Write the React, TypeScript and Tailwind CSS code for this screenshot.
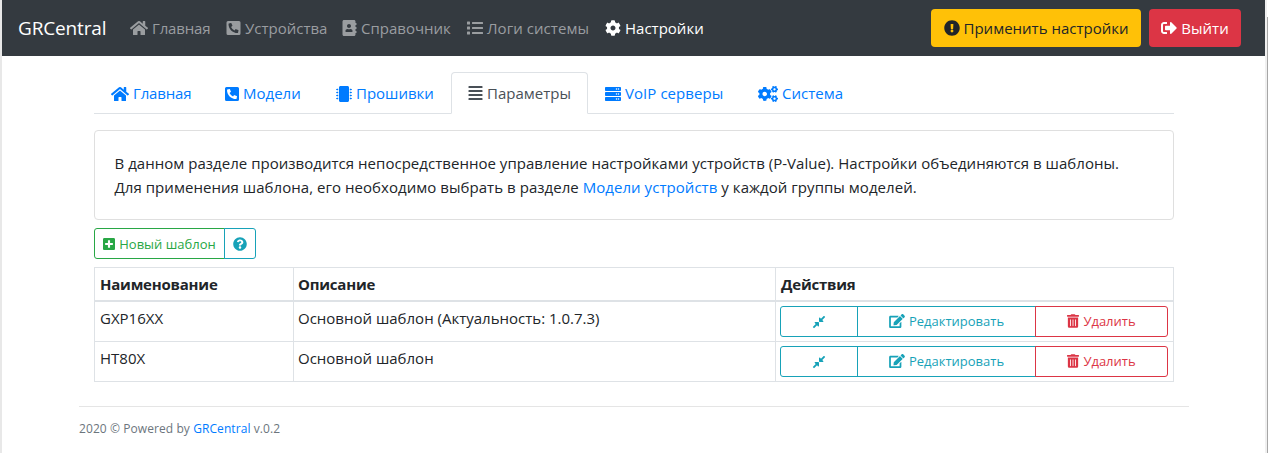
import type { ReactNode } from 'react';
import {
  FaHome, FaPhoneSquareAlt, FaAddressBook, FaList, FaCog, FaExclamationCircle, FaSignOutAlt,
  FaMicrochip, FaAlignJustify, FaServer, FaCogs, FaPlusSquare, FaQuestionCircle, FaCompressAlt,
  FaEdit, FaTrashAlt,
} from 'react-icons/fa';

function Item({ icon, label, className }: { icon: ReactNode; label: string; className: string }) {
  return (
    <a className={`flex shrink-0 items-center gap-1 whitespace-nowrap ${className}`}>
      {icon}
      <span>{label}</span>
    </a>
  );
}

function Row({ name, description }: { name: string; description: string }) {
  return (
    <tr className="h-10">
      <td className="border border-[#dee2e6] px-[5px] pt-1 align-top leading-6">{name}</td>
      <td className="border border-[#dee2e6] px-1 pt-1 align-top leading-6">{description}</td>
      <td className="border border-[#dee2e6] p-1 align-top">
        <div className="flex h-[31px] w-[388px] text-[13px]">
          <button className="flex w-[78px] items-center justify-center rounded-l-[3px] border border-[#17a2b8] pt-px text-[#17a2b8]">
            <FaCompressAlt className="size-[14px]" />
          </button>
          <button className="-ml-px flex w-[179px] items-center justify-center gap-1 border border-[#17a2b8] text-[#17a2b8]">
            <FaEdit className="h-[14px] w-4" />
            <span className="pt-0.5">Редактировать</span>
          </button>
          <button className="-ml-px flex w-[133px] items-center justify-center gap-1 rounded-r-[3px] border border-[#dc3545] text-[#dc3545]">
            <FaTrashAlt className="h-[14px] w-3" />
            <span className="pt-0.5">Удалить</span>
          </button>
        </div>
      </td>
    </tr>
  );
}

export default function App() {
  return (
    <div className="flex h-[453px] w-[1268px] overflow-hidden bg-white font-['Open_Sans','Noto_Sans',sans-serif] text-[15px] text-[#212529]">
      <div className="w-0.5 shrink-0 bg-[#e8e8e8]" />
      <div className="w-[1263px] shrink-0">
        <nav className="flex h-14 items-center bg-[#343a40] pr-6 pl-4 text-[#9a9da0]">
          <a className="w-28 shrink-0 text-[19px] tracking-[-0.15px] text-white">GRCentral</a>
          <Item className="w-24 tracking-[-0.15px]" icon={<FaHome className="h-4 w-[18px]" />} label="Главная" />
          <Item className="w-29" icon={<FaPhoneSquareAlt className="h-4 w-[15px]" />} label="Устройства" />
          <Item className="w-[125px]" icon={<FaAddressBook className="h-4 w-[15px]" />} label="Справочник" />
          <Item className="w-[138px] tracking-[0.06px]" icon={<FaList className="size-4" />} label="Логи системы" />
          <Item className="w-25 text-white" icon={<FaCog className="size-4" />} label="Настройки" />
          <button className="ml-auto flex h-[38px] w-[210px] items-center justify-center gap-1 rounded bg-[#ffc107] whitespace-nowrap text-[#212529]">
            <FaExclamationCircle className="size-4" />
            <span>Применить настройки</span>
          </button>
          <button className="ml-2 flex h-[38px] w-[92px] items-center justify-center gap-1 rounded bg-[#dc3545] text-white">
            <FaSignOutAlt className="size-4" />
            <span>Выйти</span>
          </button>
        </nav>
        <main className="ml-[92px] w-[1080px] pt-4">
          <div className="flex h-[42px] border-b border-[#dee2e6] text-[#007bff]">
            <Item className="h-[42px] w-[114px] pt-px pl-[17px] tracking-[-0.15px]" icon={<FaHome className="h-4 w-[18px]" />} label="Главная" />
            <Item className="h-[42px] w-[111px] pt-px pl-[17px]" icon={<FaPhoneSquareAlt className="h-4 w-[14px]" />} label="Модели" />
            <Item className="h-[42px] w-[132px] pt-px pl-[17px]" icon={<FaMicrochip className="size-4" />} label="Прошивки" />
            <Item className="h-[42px] w-[137px] rounded-t border border-[#dee2e6] border-b-white bg-white pl-4 text-[#495057]" icon={<FaAlignJustify className="h-4 w-[15px]" />} label="Параметры" />
            <Item className="h-[42px] w-[153px] pt-px pl-[17px] tracking-[0.06px]" icon={<FaServer className="size-4" />} label="VoIP серверы" />
            <Item className="h-[42px] w-[120px] pt-px pl-[17px]" icon={<FaCogs className="h-4 w-5" />} label="Система" />
          </div>
          <section className="mt-4 h-[90px] rounded border border-[#dfdfdf] py-5 pr-5 pl-[19.5px] leading-6 whitespace-nowrap">
            <p className="tracking-[0.03px]">В данном разделе производится непосредственное управление настройками устройств (P-Value). Настройки объединяются в шаблоны.</p>
            <p className="tracking-[0.045px]">Для применения шаблона, его необходимо выбрать в разделе <a className="text-[#007bff]">Модели устройств</a> у каждой группы моделей.</p>
          </section>
          <div className="mt-2 flex h-[31px] text-[13px]">
            <button className="flex w-[131px] items-center justify-center gap-1 rounded-l-[3px] border border-[#28a745] text-[#28a745]">
              <FaPlusSquare className="h-[14px] w-3" />
              <span className="pt-0.5">Новый шаблон</span>
            </button>
            <button className="-ml-px flex w-8 items-center justify-center rounded-r-[3px] border border-[#17a2b8] text-[#17a2b8]">
              <FaQuestionCircle className="size-[14px]" />
            </button>
          </div>
          <table className="mt-2 w-[1080px] table-fixed border-collapse border border-[#dee2e6]">
            <colgroup>
              <col className="w-[199px]" />
              <col className="w-[482px]" />
              <col />
            </colgroup>
            <thead>
              <tr className="h-[33px] text-left tracking-[-0.22px]">
                <th className="border border-b-2 border-[#dee2e6] px-[5px] pt-px font-bold">Наименование</th>
                <th className="border border-b-2 border-[#dee2e6] px-1 pt-px font-bold">Описание</th>
                <th className="border border-b-2 border-[#dee2e6] px-[5px] pt-px font-bold">Действия</th>
              </tr>
            </thead>
            <tbody>
              <Row name="GXP16XX" description="Основной шаблон (Актуальность: 1.0.7.3)" />
              <Row name="HT80X" description="Основной шаблон" />
            </tbody>
          </table>
        </main>
        <footer className="mt-6 ml-[77px] w-[1110px] border-t border-[#e5e5e5] pt-3 text-[12px] leading-5 tracking-[0.08px] text-[#6c757d]">
          2020 © Powered by <a className="text-[#007bff]">GRCentral</a> v.0.2
        </footer>
      </div>
      <div className="w-0.5 shrink-0 bg-[#f0f0f0]" />
      <div className="mt-[17px] w-px shrink-0 bg-[#a6a6a6]" />
    </div>
  );
}
